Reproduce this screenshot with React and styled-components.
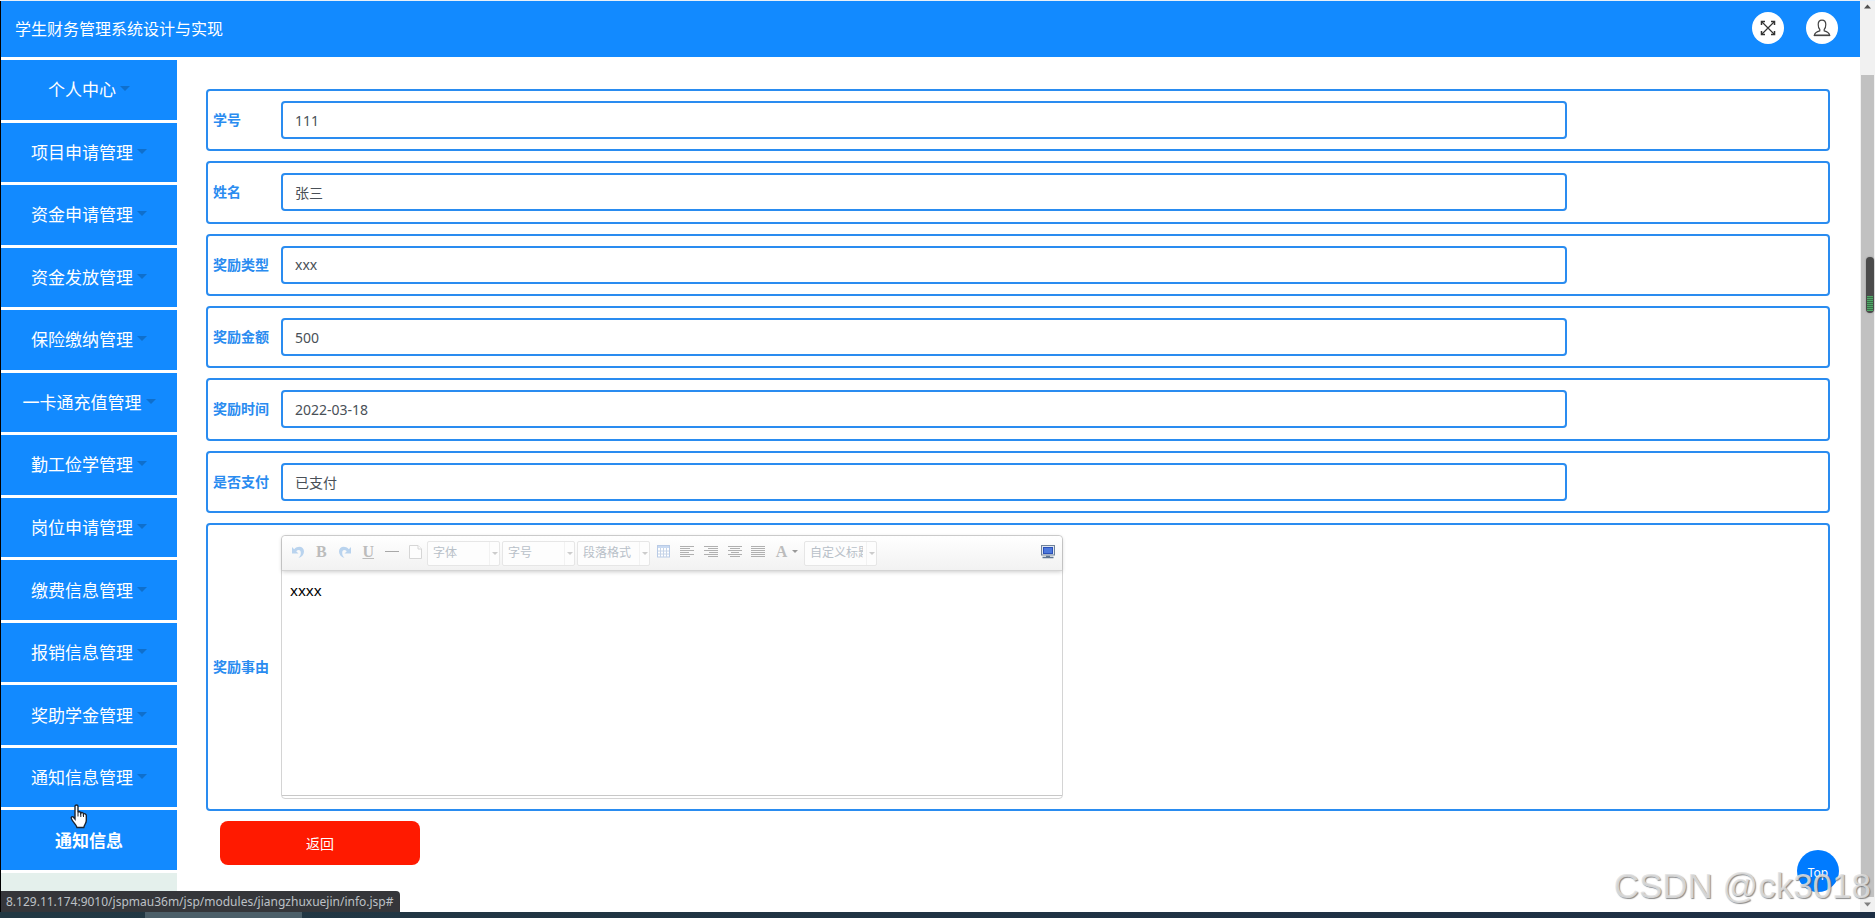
import React from 'react';
import styled, { createGlobalStyle } from 'styled-components';

const GlobalStyle = createGlobalStyle`
    * {
        box-sizing: border-box;
    }

    body {
        margin: 0;
        background: #fff;
        font-family: "Noto Sans", "Noto Sans CJK SC", sans-serif;
        font-size: 14px;
    }

    button, input, select, textarea {
        font-family: inherit;
    }
`;

const Screen = styled.div`
    position: relative;
    display: flex;
    flex-direction: column;
    height: 100vh;
    overflow: hidden;
    border-top: 1px solid #e8f0f8;
`;

const Viewport = styled.div`
    display: flex;
    flex: 1;
    min-height: 0;
    border-left: 1px solid #000;
`;

const Page = styled.div`
    flex: 1;
    min-width: 0;
    overflow: hidden;
`;

const Header = styled.header`
    display: flex;
    align-items: center;
    justify-content: space-between;
    height: 56px;
    padding: 0 22px 2px 14px;
    background: #128aff;
`;

const Title = styled.h1`
    margin: 0;
    color: #fff;
    font-size: 16px;
    font-weight: 400;
`;

const HeaderActions = styled.div`
    display: flex;
    gap: 22px;
`;

const RoundButton = styled.button`
    display: flex;
    align-items: center;
    justify-content: center;
    width: 32px;
    height: 32px;
    padding: 0;
    border: 0;
    border-radius: 50%;
    background: #fff;
`;

const Body = styled.div`
    display: flex;
    padding-top: 3px;
`;

const Sidebar = styled.nav`
    width: 176px;
    background: #fff;
`;

const MenuList = styled.ul`
    display: grid;
    grid-auto-rows: 1fr;
    gap: 3px;
    min-height: 810px;
    margin: 0;
    padding: 0;
    list-style-type: none;
`;

const MenuItem = styled.li`
    display: flex;
    padding-bottom: 2px;
    background: #128aff;
`;

const MenuButton = styled.button`
    display: flex;
    flex: 1;
    align-items: center;
    justify-content: center;
    gap: 4px;
    padding: 0;
    border: 0;
    background: none;
    color: #fff;
    font-size: 17px;
`;

const SubMenuLink = styled.a`
    display: flex;
    flex: 1;
    align-items: center;
    justify-content: center;
    color: #fff;
    font-size: 17px;
    font-weight: 700;
    text-decoration: none;
`;

const Caret = styled.span`
    border-top: ${props => props.$size}px solid ${props => props.$color};
    border-left: ${props => props.$size}px solid transparent;
    border-right: ${props => props.$size}px solid transparent;
`;

const SidebarRest = styled.div`
    height: 60px;
    margin-top: 3px;
    background: #e4f0ec;
`;

const Content = styled.main`
    flex: 1;
    min-width: 0;
    padding: 29px 30px 0 29px;
`;

const Form = styled.form`
    display: flex;
    flex-direction: column;
    gap: 10px;
`;

const FieldRows = styled.div`
    display: grid;
    grid-auto-rows: 1fr;
    gap: 10px;
    min-height: 424px;
`;

const FieldRow = styled.div`
    display: flex;
    align-items: center;
    padding: 10px 8px 10px 5px;
    border: 2px solid #2a8cf0;
    border-radius: 4px;
`;

const FieldLabel = styled.label`
    flex: none;
    width: 68px;
    padding-bottom: 2px;
    color: #2a8cf0;
    font-size: 14px;
    font-weight: 700;
`;

const FieldInput = styled.input`
    width: 80%;
    height: 38px;
    padding: 0 12px;
    border: 2px solid #2a8cf0;
    border-radius: 4px;
    background: #fff;
    color: #495057;
    font-size: 14px;
`;

const Editor = styled.div`
    width: 782px;
    padding-bottom: 2px;
    border: 1px solid #d4d4d4;
    border-radius: 4px;
`;

const EditorToolbar = styled.div`
    display: flex;
    align-items: center;
    height: 35px;
    padding: 0 3px 0 4px;
    border-bottom: 1px solid #d4d4d4;
    border-radius: 4px 4px 0 0;
    background: linear-gradient(#fff, #f2f2f2);
    box-shadow: 0 1px 4px rgba(0, 0, 0, 0.2);
`;

const ToolGroup = styled.div`
    display: grid;
    grid-auto-flow: column;
    grid-auto-columns: 1fr;
    width: ${props => props.$width}px;
`;

const ToolButton = styled.button`
    display: flex;
    align-items: center;
    justify-content: center;
    gap: 5px;
    height: 24px;
    padding: 0 0 3px;
    border: 0;
    background: none;
    color: #bcbcbc;

    svg {
        flex: none;
    }
`;

const ToolLetter = styled.span`
    font-family: "Liberation Serif", serif;
    font-size: 16px;
    font-weight: 700;
    line-height: 16px;
    text-decoration: ${props => (props.$underline ? 'underline' : 'none')};
`;

const SelectGroup = styled.div`
    display: flex;
    gap: 2px;
    margin-right: 2px;
`;

const SelectBox = styled.div`
    display: flex;
    align-items: center;
    width: 73px;
    height: 25px;
    border: 1px solid #e6e6e6;
    border-radius: 2px;
    background: #fdfdfd;
`;

const ToolSelect = styled.select`
    flex: 1;
    min-width: 0;
    height: 23px;
    padding: 0 3px 2px 5px;
    appearance: none;
    border: 0;
    border-right: 1px solid #f2f2f2;
    background: none;
    color: #b8c0c8;
    font-size: 12px;
    opacity: 1;
`;

const SelectArrow = styled.span`
    display: flex;
    justify-content: center;
    width: 9px;
`;

const FullscreenSlot = styled.div`
    margin-left: auto;
`;

const EditorText = styled.textarea`
    display: block;
    width: 100%;
    height: 225px;
    padding: 8px;
    border: 0;
    border-bottom: 1px solid #c8c8c8;
    outline: 0;
    resize: none;
    background: none;
    color: #000;
    font-size: 15px;
    line-height: 22px;
`;

const BackButton = styled.button`
    width: 200px;
    height: 44px;
    margin-left: 14px;
    border: 0;
    border-radius: 8px;
    background: #ff1a00;
    color: #fff;
    font-size: 14px;
`;

const Scrollbar = styled.div`
    display: flex;
    flex-direction: column;
    align-items: center;
    width: 15px;
    padding: 3px 0 5px;
    background: #f1f1f1;
`;

const ScrollThumb = styled.div`
    flex: 1;
    width: 13px;
    margin: 66px 0 5px;
    background: #c1c1c1;
`;

const Taskbar = styled.div`
    height: 6px;
    padding-left: 145px;
    background: linear-gradient(90deg, #223843, #1e2f45);
`;

const TaskbarItem = styled.div`
    width: 157px;
    height: 6px;
    background: #4c5f69;
`;

const LinkStatus = styled.div`
    position: absolute;
    left: 1px;
    bottom: 6px;
    height: 21px;
    padding: 0 6px 0 5px;
    border-radius: 0 4px 0 0;
    background: #35363a;
    color: #bdc1c6;
    font-size: 12px;
    line-height: 22px;
`;

const TopButton = styled.button`
    position: absolute;
    right: 36px;
    bottom: 26px;
    width: 42px;
    height: 42px;
    padding: 2px 0 0;
    border: 0;
    border-radius: 50%;
    background: #007bff;
    color: #fff;
    font-size: 12px;
`;

const Watermark = styled.div`
    position: absolute;
    right: 4px;
    bottom: 12px;
    color: rgba(225, 225, 225, 0.85);
    font-family: "Liberation Sans", sans-serif;
    font-size: 35px;
    line-height: 40px;
    text-shadow: 1px 1px 1px rgba(90, 90, 90, 0.7);
    pointer-events: none;
`;

const Pointer = styled.svg`
    position: absolute;
    left: 69px;
    top: 803px;
`;

const VolumeMeter = styled.div`
    position: absolute;
    right: 1px;
    top: 256px;
    width: 8px;
    height: 56px;
    padding-top: 39px;
    overflow: hidden;
    border-radius: 4px;
    background: #4a4a4a;
    box-shadow: 0 0 2px #888;
`;

const VolumeLevel = styled.div`
    height: 15px;
    margin: 0 1px;
    background: repeating-linear-gradient(#4fa866 0 1px, #3b6b48 1px 2px);
`;

const menu = [
    '个人中心',
    '项目申请管理',
    '资金申请管理',
    '资金发放管理',
    '保险缴纳管理',
    '一卡通充值管理',
    '勤工俭学管理',
    '岗位申请管理',
    '缴费信息管理',
    '报销信息管理',
    '奖助学金管理',
    '通知信息管理',
];

const fields = [
    { id: 'xuehao', label: '学号', value: '111' },
    { id: 'xingming', label: '姓名', value: '张三' },
    { id: 'leixing', label: '奖励类型', value: 'xxx' },
    { id: 'jine', label: '奖励金额', value: '500' },
    { id: 'shijian', label: '奖励时间', value: '2022-03-18' },
    { id: 'zhifu', label: '是否支付', value: '已支付' },
];

// [x, width] of each line
const alignments = {
    左对齐: [[0, 14], [0, 10], [0, 14], [0, 9], [0, 14], [0, 10]],
    右对齐: [[0, 14], [4, 10], [0, 14], [5, 9], [0, 14], [4, 10]],
    居中: [[0, 14], [2, 10], [0, 14], [3, 8], [0, 14], [2, 10]],
    两端对齐: [[0, 14], [0, 14], [0, 14], [0, 14], [0, 14], [0, 14]],
};

const ExpandIcon = () => (
    <svg width="16" height="16" viewBox="0 0 16 16" fill="none" stroke="#333">
        <path d="M1.5 1.5l13 13M14.5 1.5l-13 13" strokeWidth="1.2" />
        <path d="M1.500 5V1.500H5M11 1.500h3.500V5M14.500 11v3.500H11M5 14.500H1.500V11" strokeWidth="1.500" />
    </svg>
);

const UserIcon = () => (
    <svg width="18" height="18" viewBox="0 0 18 18" fill="none" stroke="#444" strokeWidth="1.2">
        <path d="M6.8 10.5C5.6 9.300 5.200 7.600 5.200 5.600C5.200 3 6.600 1.200 9 1.200s3.800 1.800 3.800 4.400c0 2-.4 3.700-1.600 4.900v1.300c2.800.7 5 1.700 5.500 4.600H1.300c.5-2.900 2.700-3.900 5.500-4.600z" />
        <path d="M1 16.400h16" strokeWidth="1.500" />
    </svg>
);

const UndoIcon = ({ flip }) => (
    <svg width="14" height="14" viewBox="0 0 14 14">
        <g transform={flip ? 'translate(14 0) scale(-1 1)' : undefined}>
            <path d="M1 2v6.500h6.500L5.200 6.200C7.500 4 10 5 9.800 8c0 2-.8 3.500-2.300 5C11 11.800 13 9.500 13 6.500 13 1.500 7 .2 3.200 4.200z" fill="#b9d3ee" />
        </g>
    </svg>
);

const AlignIcon = ({ lines }) => (
    <svg width="14" height="12" viewBox="0 0 14 12">
        {lines.map(([x, width], i) => (
            <rect key={i} x={x} y={i * 2} width={width} height="1" fill="#b0b0b0" />
        ))}
    </svg>
);

const TableIcon = () => (
    <svg width="13" height="13" viewBox="0 0 13 13">
        <rect x=".5" y=".5" width="12" height="11.500" fill="#fff" stroke="#b9cbe6" />
        <rect x="1" y="1" width="11" height="2" fill="#c9daf2" />
        <path d="M1 6h11M1 9h11M3.500 3v9M6.500 3v9M9.500 3v9" stroke="#c6d4e8" />
    </svg>
);

const PageIcon = () => (
    <svg width="13" height="14" viewBox="0 0 13 14" fill="#fdfdfd" stroke="#d6d6d6">
        <path d="M.5.5h8.500l3.500 3.500v9.500H.5z" />
        <path d="M9 .5V4h3.500" />
    </svg>
);

const MonitorIcon = () => (
    <svg width="14" height="14" viewBox="0 0 14 14">
        <rect x=".5" y=".5" width="13" height="9.500" fill="#dfe6f0" stroke="#6f8299" />
        <rect x="2" y="2" width="10" height="7" fill="#2b50b8" />
        <rect x="3" y="3" width="8" height="5" fill="#4c78dc" />
        <path d="M5 11.500h4M1.500 12.500h11" stroke="#5d7591" strokeWidth="1.500" />
    </svg>
);

const EditorSelect = ({ label }) => (
    <SelectBox>
        <ToolSelect aria-label={label} disabled>
            <option>{label}</option>
        </ToolSelect>
        <SelectArrow><Caret $size={3} $color="#ccc" /></SelectArrow>
    </SelectBox>
);

const Toolbar = () => (
    <EditorToolbar>
        <ToolGroup $width={141}>
            <ToolButton type="button" aria-label="撤销"><UndoIcon /></ToolButton>
            <ToolButton type="button"><ToolLetter>B</ToolLetter></ToolButton>
            <ToolButton type="button" aria-label="重做"><UndoIcon flip /></ToolButton>
            <ToolButton type="button"><ToolLetter $underline>U</ToolLetter></ToolButton>
            <ToolButton type="button" aria-label="分隔线">
                <svg width="14" height="2"><rect width="14" height="1" fill="#a8a8a8" /></svg>
            </ToolButton>
            <ToolButton type="button" aria-label="清空文档"><PageIcon /></ToolButton>
        </ToolGroup>
        <SelectGroup>
            <EditorSelect label="字体" />
            <EditorSelect label="字号" />
            <EditorSelect label="段落格式" />
        </SelectGroup>
        <ToolGroup $width={118}>
            <ToolButton type="button" aria-label="表格"><TableIcon /></ToolButton>
            {Object.keys(alignments).map(name => (
                <ToolButton type="button" key={name} aria-label={name}>
                    <AlignIcon lines={alignments[name]} />
                </ToolButton>
            ))}
        </ToolGroup>
        <ToolGroup $width={34}>
            <ToolButton type="button">
                <ToolLetter>A</ToolLetter>
                <Caret $size={3} $color="#999" />
            </ToolButton>
        </ToolGroup>
        <EditorSelect label="自定义标题" />
        <FullscreenSlot>
            <ToolGroup $width={23}>
                <ToolButton type="button" aria-label="全屏"><MonitorIcon /></ToolButton>
            </ToolGroup>
        </FullscreenSlot>
    </EditorToolbar>
);

const SideMenu = () => (
    <Sidebar>
        <MenuList>
            {menu.map(name => (
                <MenuItem key={name}>
                    <MenuButton type="button">
                        {name}
                        <Caret $size={5} $color="#0f6fcc" />
                    </MenuButton>
                </MenuItem>
            ))}
            <MenuItem>
                <SubMenuLink href="#">通知信息</SubMenuLink>
            </MenuItem>
        </MenuList>
        <SidebarRest />
    </Sidebar>
);

const RewardForm = () => (
    <Form>
        <FieldRows>
            {fields.map(field => (
                <FieldRow key={field.id}>
                    <FieldLabel htmlFor={field.id}>{field.label}</FieldLabel>
                    <FieldInput id={field.id} type="text" defaultValue={field.value} readOnly />
                </FieldRow>
            ))}
        </FieldRows>
        <FieldRow>
            <FieldLabel htmlFor="shiyou">奖励事由</FieldLabel>
            <Editor>
                <Toolbar />
                <EditorText id="shiyou" defaultValue="xxxx" readOnly />
            </Editor>
        </FieldRow>
        <BackButton type="button">返回</BackButton>
    </Form>
);

const App = () => (
    <Screen>
        <GlobalStyle />
        <Viewport>
            <Page>
                <Header>
                    <Title>学生财务管理系统设计与实现</Title>
                    <HeaderActions>
                        <RoundButton type="button" aria-label="全屏"><ExpandIcon /></RoundButton>
                        <RoundButton type="button" aria-label="用户"><UserIcon /></RoundButton>
                    </HeaderActions>
                </Header>
                <Body>
                    <SideMenu />
                    <Content>
                        <RewardForm />
                    </Content>
                </Body>
            </Page>
            <Scrollbar>
                <svg width="7" height="5"><path d="M0 4.500L3.500 .5 7 4.500z" fill="#505050" /></svg>
                <ScrollThumb />
                <svg width="7" height="5"><path d="M0 .5L3.500 4.500 7 .5z" fill="#808080" /></svg>
            </Scrollbar>
        </Viewport>
        <Taskbar><TaskbarItem /></Taskbar>
        <TopButton type="button">Top</TopButton>
        <LinkStatus>8.129.11.174:9010/jspmau36m/jsp/modules/jiangzhuxuejin/info.jsp#</LinkStatus>
        <VolumeMeter><VolumeLevel /></VolumeMeter>
        <Watermark>CSDN @ck3018</Watermark>
        <Pointer width="20" height="25" viewBox="0 0 20 25" aria-hidden="true">
            <path
                d="M6 2.500c0-2 3-2 3 0v6c.5-1.300 2.800-1 2.800.7.7-1.200 2.700-.8 2.700.9.8-.9 2.800-.4 2.800 1.400v5c0 3-2 4-2.500 7H8c-.8-3-3.500-4.500-5.500-8.500-1-2 1-3 2-1.800L6 15z"
                fill="#fff"
                stroke="#1c2430"
                strokeWidth="1.400"
            />
            <path d="M9 8.500v4M11.800 9v4M14.500 10v3" stroke="#1c2430" />
        </Pointer>
    </Screen>
);

export default App;
